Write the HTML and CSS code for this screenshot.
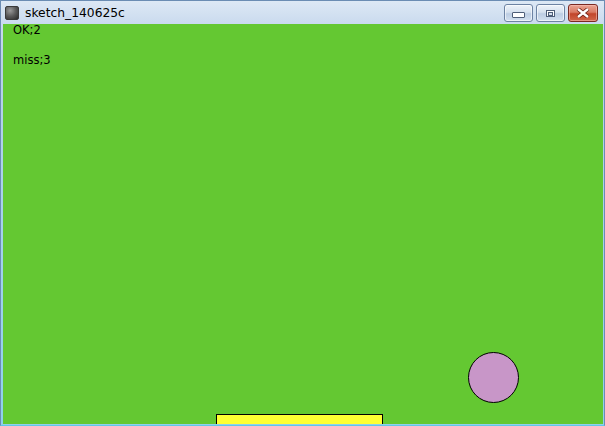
FILE: index.html
```html
<!DOCTYPE html>
<html>
<head>
<meta charset="utf-8">
<link rel="stylesheet" href="styles.css">
</head>
<body>
<div class="window">
  <div class="titlebar">
    <div class="app-icon"></div>
    <div class="title">sketch_140625c</div>
    <div class="controls">
      <div class="btn btn-min"><span class="min-glyph"></span></div>
      <div class="btn btn-max"><span class="max-glyph"></span></div>
      <div class="btn btn-close">
        <svg width="14" height="10" viewBox="0 0 14 10"><path d="M2 1 L12 9 M12 1 L2 9" stroke="#6b1c10" stroke-width="4" stroke-linecap="butt"/><path d="M2 1 L12 9 M12 1 L2 9" stroke="#ffffff" stroke-width="2.4" stroke-linecap="butt"/></svg>
      </div>
    </div>
  </div>
  <div class="canvas">
    <div class="label label-ok">OK;2</div>
    <div class="label label-miss">miss;3</div>
    <div class="ball"></div>
    <div class="paddle"></div>
  </div>
</div>
</body>
</html>
```
FILE: styles.css
```css
html, body {
  margin: 0;
  padding: 0;
  width: 605px;
  height: 426px;
  overflow: hidden;
}
.window {
  width: 605px;
  height: 426px;
  box-sizing: border-box;
  background: linear-gradient(to bottom, #dde8f5 0px, #c9daee 24px, #b9d1ea 60px, #8fd0ec 100%);
  border: 1px solid #6b8cb3;
  border-bottom-color: #5ec8e8;
  display: flex;
  flex-direction: column;
}
.titlebar {
  height: 23px;
  display: flex;
  align-items: center;
  position: relative;
  flex: none;
}
.app-icon {
  width: 14px;
  height: 14px;
  margin-left: 4px;
  margin-top: 1px;
  border-radius: 2px;
  background: radial-gradient(circle at 35% 30%, #9a9a9a 0%, #5a5a5a 50%, #2a2a2a 100%);
  border: 1px solid #3a3a3a;
  box-sizing: border-box;
}
.title {
  margin-left: 6px;
  margin-top: 1px;
  font-family: "DejaVu Sans", "Liberation Sans", sans-serif;
  font-size: 12.3px;
  color: #000;
}
.controls {
  margin-left: auto;
  margin-right: 6px;
  display: flex;
  gap: 3px;
  align-self: flex-start;
  margin-top: 3px;
}
.btn {
  width: 29px;
  height: 18px;
  box-sizing: border-box;
  border: 1px solid #6d83a3;
  border-radius: 3px;
  background: linear-gradient(to bottom, #eef3fa 0%, #d6e1ef 45%, #bccde3 55%, #d3e0f0 100%);
  display: flex;
  align-items: center;
  justify-content: center;
  box-shadow: inset 0 0 0 1px rgba(255,255,255,0.6);
}
.btn-close {
  width: 30px;
  border-color: #7a2a22;
  background: linear-gradient(to bottom, #e9a493 0%, #d97a63 45%, #c2452a 55%, #d0664a 100%);
  box-shadow: inset 0 0 0 1px rgba(255,200,190,0.5);
}
.min-glyph {
  width: 11px;
  height: 4px;
  margin-top: 4px;
  background: #fff;
  border: 1px solid #4e5e78;
  border-radius: 1px;
}
.max-glyph {
  width: 9px;
  height: 7px;
  box-sizing: border-box;
  border: 1px solid #4e5e78;
  background: #fff;
  position: relative;
}
.max-glyph::after {
  content: "";
  position: absolute;
  left: 1px;
  top: 1px;
  width: 3px;
  height: 2px;
  border: 1px solid #4e5e78;
  background: #d6e1ef;
}
.canvas {
  position: relative;
  flex: 1;
  margin: 0 1px 1px 2px;
  background: #64c832;
  overflow: hidden;
}
.label {
  position: absolute;
  left: 10px;
  font-family: "DejaVu Sans", "Liberation Sans", sans-serif;
  font-size: 11.5px;
  color: #000;
  line-height: 12px;
}
.label-ok { top: 0; }
.label-miss { top: 30px; }
.ball {
  position: absolute;
  left: 465px;
  top: 328px;
  width: 51px;
  height: 51px;
  box-sizing: border-box;
  border: 1px solid #000;
  border-radius: 50%;
  background: #c896c8;
}
.paddle {
  position: absolute;
  left: 213px;
  top: 390px;
  width: 167px;
  height: 20px;
  box-sizing: border-box;
  border: 1px solid #000;
  background: #ffff32;
}
```
